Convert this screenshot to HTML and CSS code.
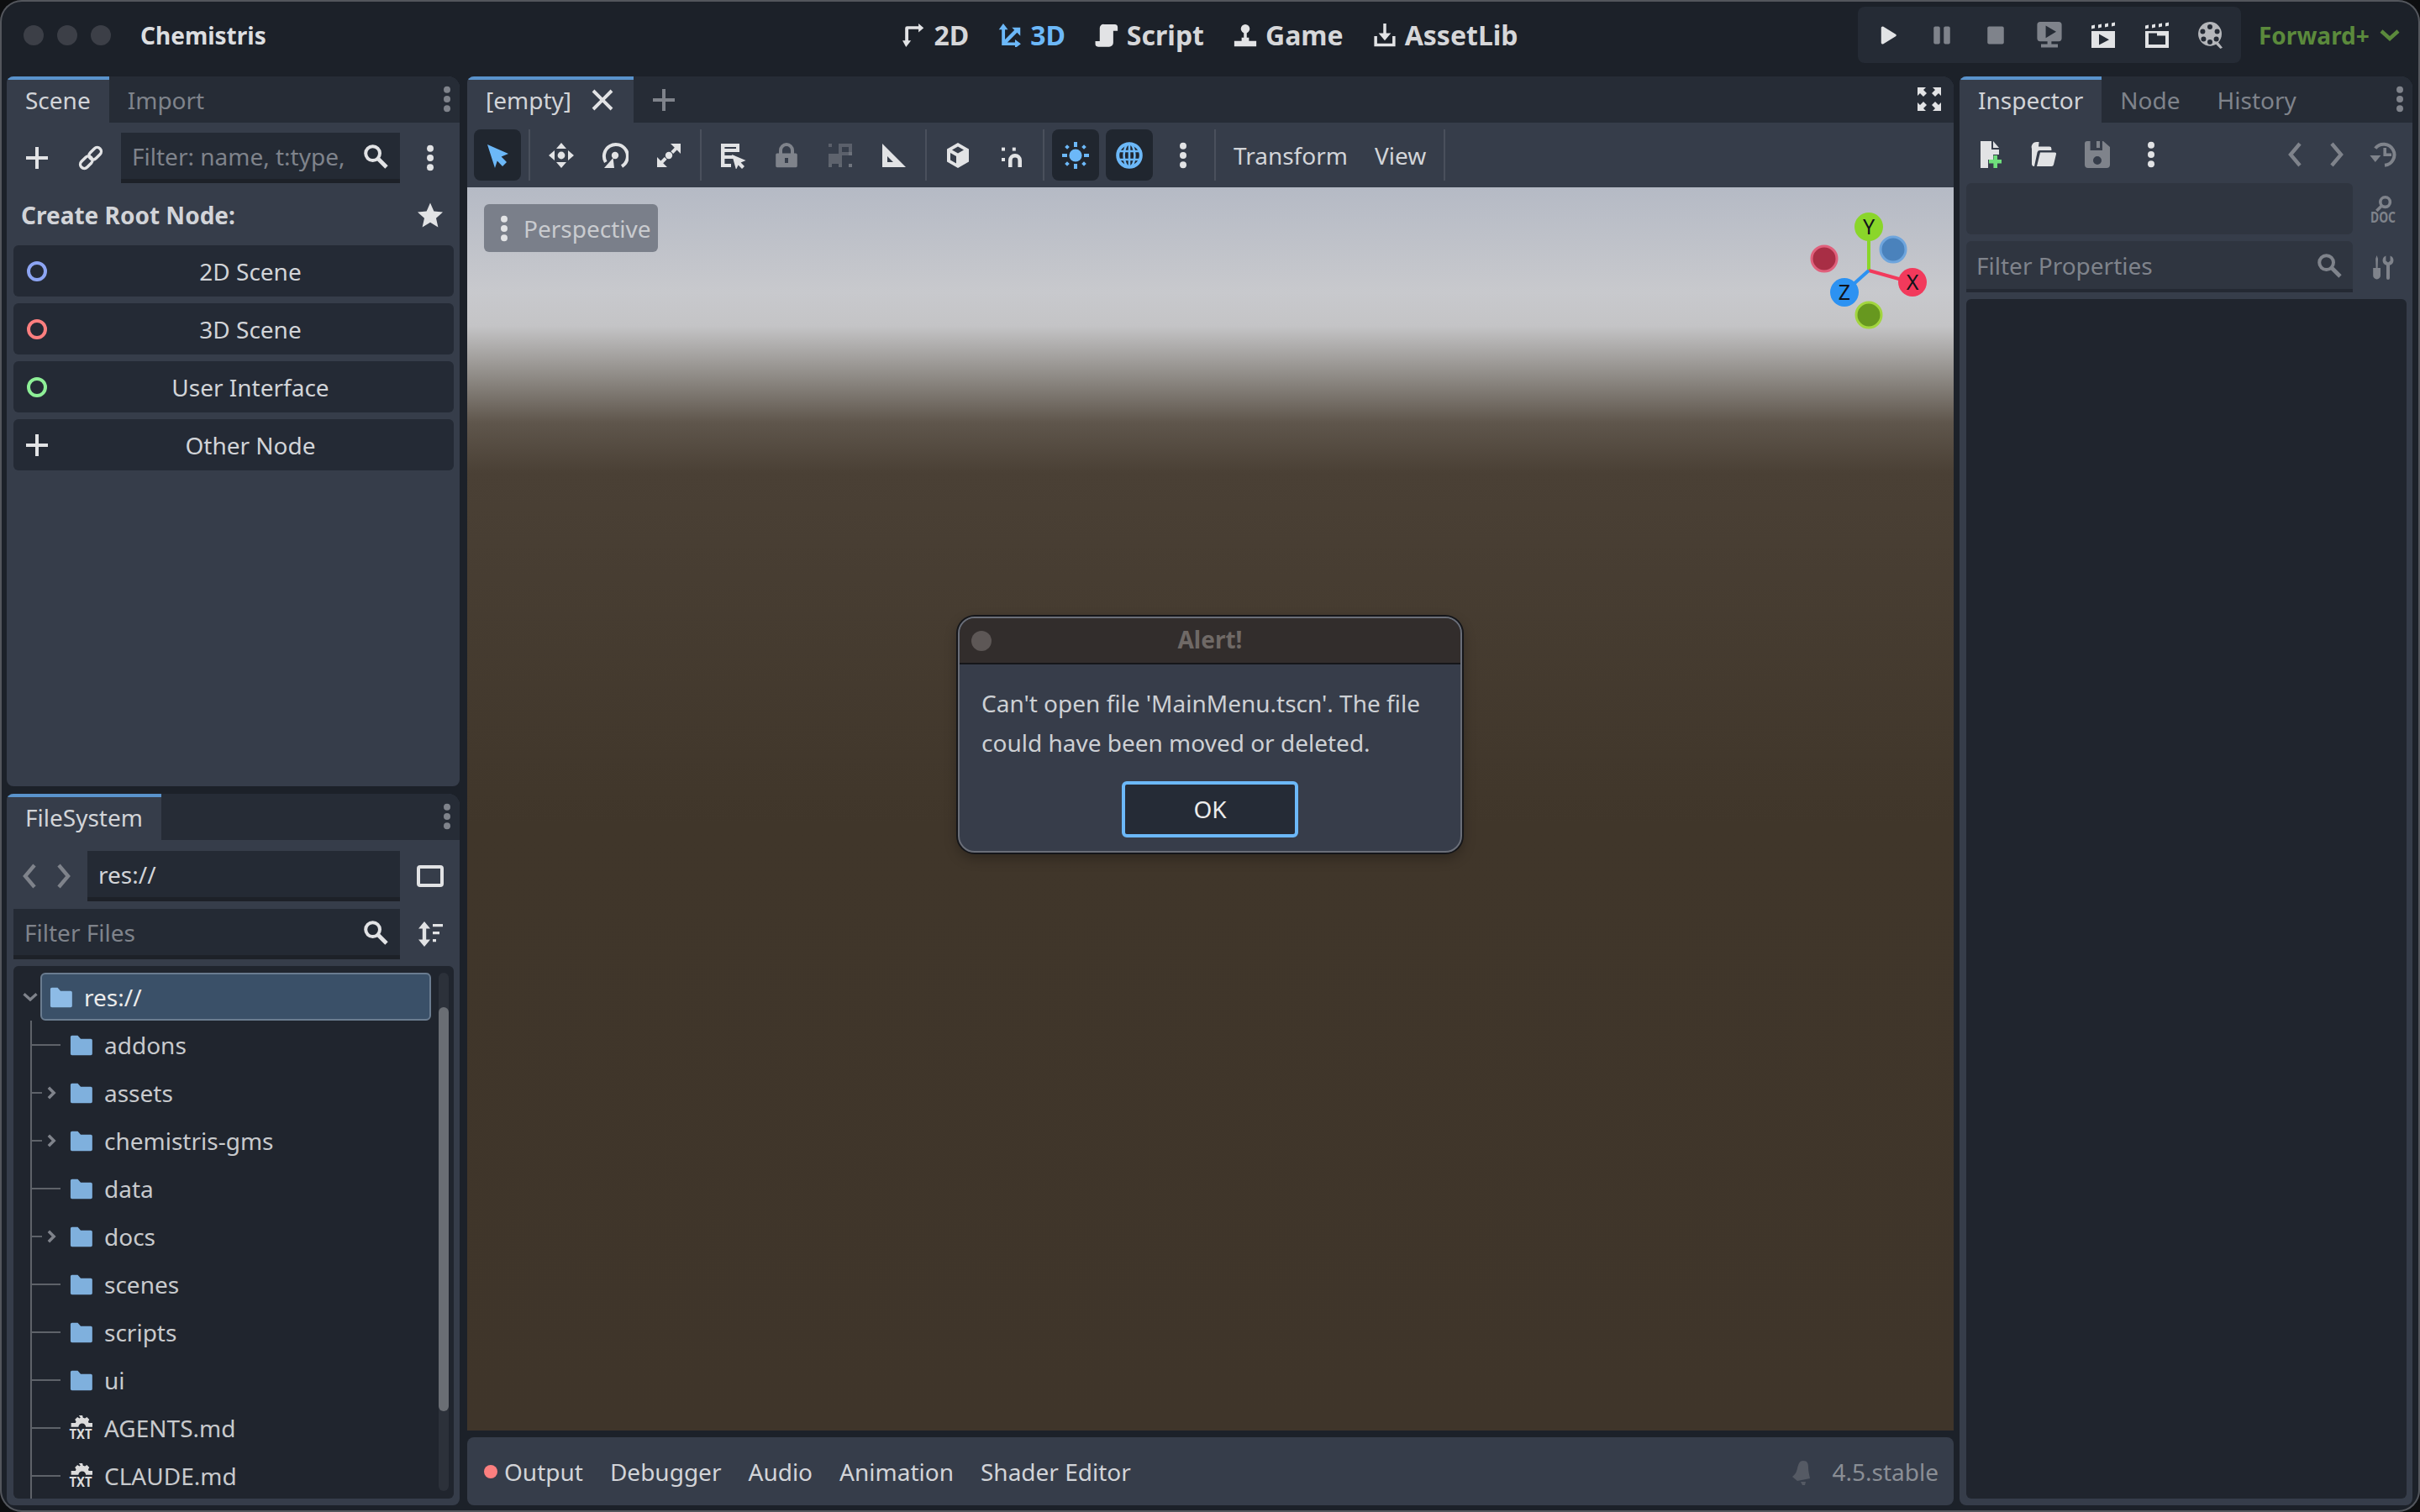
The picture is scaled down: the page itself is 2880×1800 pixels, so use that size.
FILE: index.html
```html
<!doctype html>
<html lang="en">
  <head>
    <meta charset="utf-8">
    <title>Chemistris - Godot Engine</title>
    <link rel="stylesheet" href="styles.css">
  </head>
  <body>
    <svg class="defs" width="0" height="0" aria-hidden="true">
      <symbol id="i-plus" viewBox="0 0 16 16"><path d="M7 1.5h2V7h5.5v2H9v5.5H7V9H1.5V7H7z"/></symbol>
      <symbol id="i-close" viewBox="0 0 16 16"><path d="M3.2 1.8 8 6.6l4.8-4.8 1.4 1.4L9.4 8l4.8 4.8-1.4 1.4L8 9.4l-4.8 4.8-1.4-1.4L6.6 8 1.8 3.2z"/></symbol>
      <symbol id="i-dots" viewBox="0 0 16 16"><circle cx="8" cy="2.4" r="2"/><circle cx="8" cy="8" r="2"/><circle cx="8" cy="13.6" r="2"/></symbol>
      <symbol id="i-search" viewBox="0 0 16 16"><circle cx="6.3" cy="6.3" r="4.2" fill="none" stroke="currentColor" stroke-width="2"/><path d="M9 9l5.5 5.5" stroke="currentColor" stroke-width="2.4" fill="none"/></symbol>
      <symbol id="i-star" viewBox="0 0 16 16"><path d="M8 .8l2.2 5 5.3.5-4 3.6 1.2 5.3L8 12.4l-4.7 2.8 1.2-5.3-4-3.6 5.3-.5z"/></symbol>
      <symbol id="i-link" viewBox="0 0 16 16"><g fill="none" stroke="currentColor" stroke-width="1.7" transform="rotate(45 8 8)"><rect x="5.6" y=".2" width="4.8" height="8.2" rx="2.4"/><rect x="5.6" y="7.6" width="4.8" height="8.2" rx="2.4"/></g></symbol>
      <symbol id="i-2d" viewBox="0 0 16 16"><path d="M3 16 .6 11.5h1.8V3.2a1.4 1.4 0 0 1 1.4-1.4h7.7V0L15 3l-3.500 3V3.900H4.600v7.600h1.800z"/></symbol>
      <symbol id="i-3d" viewBox="0 0 16 16"><path d="M3.400 0l3.200 4.200h-2v6.700L11 4.400 9.300 2.700H15v5.700l-2.200-2.300-6.600 6.700h5.200v-2l4 3-4 3v-2H2.400V4.200h-2z"/></symbol>
      <symbol id="i-script" viewBox="0 0 16 16"><path d="M6 .5h7.500a2 2 0 0 1 2 2V5h-3v8a2.800 2.800 0 0 1-2.800 2.800H2.200a1.900 1.900 0 0 1-1.900-1.900V12h3V3A2.600 2.600 0 0 1 6 .5z"/></symbol>
      <symbol id="i-game" viewBox="0 0 16 16"><circle cx="8" cy="3.600" r="3"/><path d="M7 5.500h2v5H7zM5.500 9.500h5v2.400h5v3.600H.5v-3.600h5z"/></symbol>
      <symbol id="i-asset" viewBox="0 0 16 16"><path d="M7 0h2v6.500h3.200L8 11.500l-4.200-5H7zM.8 8.500h2v5h10.400v-5h2v7H.8z"/></symbol>
      <symbol id="i-play" viewBox="0 0 16 16"><path d="M2.500 2.100c0-.9 1-1.500 1.800-1L14 7.100c.7.400.7 1.400 0 1.800l-9.700 6c-.8.500-1.800-.1-1.800-1z"/></symbol>
      <symbol id="i-pause" viewBox="0 0 16 16"><rect x="1.500" y="1" width="5" height="14" rx="1.300"/><rect x="9.500" y="1" width="5" height="14" rx="1.300"/></symbol>
      <symbol id="i-stop" viewBox="0 0 16 16"><rect x="1.500" y="1" width="13" height="14" rx="1.300"/></symbol>
      <symbol id="i-remote" viewBox="0 0 16 16"><path fill-rule="evenodd" d="M2.500 0h11a1.800 1.800 0 0 1 1.800 1.800v8a1.800 1.800 0 0 1-1.800 1.800H9.200v1.600H13v2H3v-2h3.800v-1.600H2.500A1.800 1.800 0 0 1 .7 9.800v-8A1.800 1.800 0 0 1 2.500 0zM5.800 2.200v7.400L12 5.900z"/></symbol>
      <symbol id="i-movie" viewBox="0 0 16 16"><path fill-rule="evenodd" d="M1 5.500h14v10H1zM5.500 7.300v6.500l6-3.200zM1 2.200l2-.4v2l-2 .4zM5 1.700l2-.4v2l-2 .4zM9 1.200l2-.4v2l-2 .4zM13 .7l2-.4v2l-2 .4z"/></symbol>
      <symbol id="i-movie2" viewBox="0 0 16 16"><path fill-rule="evenodd" d="M1 5.500h14v10H1zM3 8.200v5.300h10V8.200H8V6.800H3zM1 2.200l2-.4v2l-2 .4zM5 1.700l2-.4v2l-2 .4zM9 1.200l2-.4v2l-2 .4zM13 .7l2-.4v2l-2 .4z"/></symbol>
      <symbol id="i-film" viewBox="0 0 16 16"><path fill-rule="evenodd" d="M7.500 0a7 7.200 0 0 1 7 7.200c0 2-.8 3.800-2 5l2.500 3.200-1.300.6-2.600-2.600A7 7.200 0 1 1 7.500 0zm0 1.500a1.500 1.500 0 1 0 0 3 1.500 1.500 0 0 0 0-3zM3.200 4.200a1.500 1.500 0 1 0 0 3 1.500 1.500 0 0 0 0-3zm8.600 0a1.500 1.500 0 1 0 0 3 1.500 1.500 0 0 0 0-3zM3.700 8.700a1.500 1.500 0 1 0 0 3 1.500 1.500 0 0 0 0-3zm7.600 0a1.500 1.500 0 1 0 0 3 1.500 1.500 0 0 0 0-3zm-3.800 1.800a1.500 1.500 0 1 0 0 3 1.500 1.500 0 0 0 0-3z"/></symbol>
      <symbol id="i-select" viewBox="0 0 16 16"><path d="M2 1.500 14.500 7l-4.200 1.800 3.200 3.200-2.500 2.500-3.100-3.200-1.400 4.200z"/></symbol>
      <symbol id="i-move" viewBox="0 0 16 16"><path d="M8 .5 11 4H5zM8 15.500 5 12h6zM.5 8 4 5v6zM15.500 8 12 11V5z"/><circle cx="8" cy="8" r="2.200"/></symbol>
      <symbol id="i-rotate" viewBox="0 0 16 16"><path d="M12 14.500A7 7 0 1 0 2.400 12" fill="none" stroke="currentColor" stroke-width="2"/><path d="M6.800 9.500l.7 6h-6z"/><circle cx="8" cy="8" r="2.100"/></symbol>
      <symbol id="i-scale" viewBox="0 0 16 16"><path d="M9 1h6v6l-2.200-2.200-2.200 2.200-1.400-1.400 2.200-2.200zM7 15H1V9l2.200 2.200L5.400 9l1.400 1.400-2.200 2.200z"/><circle cx="8" cy="8" r="2.100"/></symbol>
      <symbol id="i-listsel" viewBox="0 0 16 16"><path d="M1 1h11v5H3.200v2H9v2H3.200v3H7v2H1zM3.200 3v1H10V3z" fill-rule="evenodd"/><path d="M7.500 7.500l8.300 3.500-3 1.200 2.200 2.300-1.500 1.500-2.200-2.300-1.300 2.800z"/></symbol>
      <symbol id="i-lock" viewBox="0 0 16 16"><path fill-rule="evenodd" d="M3.500 6.800V5a4.500 4.500 0 0 1 9 0v1.800h1.100a.8.800 0 0 1 .8.800v6.700a.8.800 0 0 1-.8.800H2.400a.8.800 0 0 1-.8-.8V7.600a.8.800 0 0 1 .8-.8zm2 0h5V5a2.500 2.500 0 0 0-5 0zM7 9.500v3h2v-3z"/></symbol>
      <symbol id="i-group" viewBox="0 0 16 16"><rect x="1" y="1" width="2" height="2" opacity=".5"/><rect x="7" y="1" width="8" height="2" opacity=".5"/><rect x="7" y="3" width="2" height="4" opacity=".5"/><rect x="13" y="3" width="2" height="5" opacity=".5"/><rect x="9" y="6" width="6" height="2" opacity=".5"/><rect x="1" y="7" width="8" height="6" opacity=".55"/><rect x="1" y="13" width="2" height="2" opacity=".6"/><rect x="7" y="13" width="2" height="2" opacity=".6"/><rect x="13" y="13" width="2" height="2" opacity=".8"/></symbol>
      <symbol id="i-ruler" viewBox="0 0 16 16"><path fill-rule="evenodd" d="M1 1l14 14H1zM4 8.500V12h3.500z"/></symbol>
      <symbol id="i-cube" viewBox="0 0 16 16"><path fill-rule="evenodd" d="M8 .5l6.500 3.700v7.600L8 15.500l-6.500-3.700V4.200zM3.500 6.500v4.200L7 12.800V8.500zM8 2.700 4.500 4.700 8 6.800l3.500-2.100z"/></symbol>
      <symbol id="i-magnet" viewBox="0 0 16 16"><rect x="2" y="3.300" width="2" height="2"/><rect x="8.400" y="3.300" width="2" height="2"/><rect x="2" y="9.500" width="2" height="2"/><path d="M6 15v-4a4 4 0 0 1 8 0v4h-2.300v-4a1.700 1.700 0 0 0-3.400 0v4z"/></symbol>
      <symbol id="i-sun" viewBox="0 0 16 16"><circle cx="8" cy="8" r="3.800"/><path d="M7 0h2v3H7zM7 13h2v3H7zM0 7h3v2H0zM13 7h3v2h-3zM3 1.600 4.400 3 3 4.400 1.600 3zM13 1.600 14.400 3 13 4.400 11.600 3zM3 11.600 4.400 13 3 14.400 1.600 13zM13 11.600 14.400 13 13 14.400 11.600 13z"/></symbol>
      <symbol id="i-globe" viewBox="0 0 16 16"><g fill="none" stroke="currentColor" stroke-width="1.300"><circle cx="8" cy="8" r="6.900" stroke-width="2"/><ellipse cx="8" cy="8" rx="3.200" ry="7"/><path d="M8 1v14M1.500 5.500h13M1.500 10.500h13"/></g></symbol>
      <symbol id="i-full" viewBox="0 0 16 16"><path d="M1 1h5L4.500 2.500l2 2-2 2-2-2L1 6zM15 1v5l-1.500-1.500-2 2-2-2 2-2L10 1zM1 15v-5l1.500 1.500 2-2 2 2-2 2L6 15zM15 15h-5l1.500-1.500-2-2 2-2 2 2L15 10z"/></symbol>
      <symbol id="i-new" viewBox="0 0 16 16"><path d="M2.500 0H9v5h4.500v3H10v3H7v5H2.500zM10 0l3.500 4H10z"/><path fill="#6fe07c" d="M10.200 8.500h2.300V11H15v2.300h-2.500V16h-2.300v-2.700H7.500V11h2.700z"/></symbol>
      <symbol id="i-open" viewBox="0 0 16 16"><path d="M5 3.300h6.500a1.200 1.200 0 0 1 1.200 1.200v1H5.700a1.500 1.500 0 0 0-1.400 1.100L2.500 15h-.3A1.200 1.200 0 0 1 1 13.800V4.500a3 3 0 0 1 3-4h1.300z"/><path d="M6 6.700h8.700a.8.800 0 0 1 .8 1L14 14a1.300 1.300 0 0 1-1.300 1H4z"/></symbol>
      <symbol id="i-save" viewBox="0 0 16 16"><path fill-rule="evenodd" d="M2 0h1.800v5.500H11V0h.5l4 3.500V14a2 2 0 0 1-2 2h-11a2 2 0 0 1-2-2V1.500A1.500 1.500 0 0 1 2 0zm6 9a2.500 2.500 0 1 0 0 5 2.500 2.500 0 0 0 0-5zM7.500 0h2v4h-2z"/></symbol>
      <symbol id="i-prev" viewBox="0 0 16 16"><path d="M10.500 1.500 5 8l5.500 6.500" fill="none" stroke="currentColor" stroke-width="2.200"/></symbol>
      <symbol id="i-next" viewBox="0 0 16 16"><path d="M5.500 1.500 11 8l-5.500 6.500" fill="none" stroke="currentColor" stroke-width="2.200"/></symbol>
      <symbol id="i-history" viewBox="0 0 16 16"><path d="M3.400 4.300A6.300 6.300 0 1 1 9 14.400" fill="none" stroke="currentColor" stroke-width="2"/><path d="M.2 8.500h6.500l-3.300 4zM8.200 4H10v3.200h3V9H8.200z"/></symbol>
      <symbol id="i-tools" viewBox="0 0 16 16"><path d="M4.300 1l.7 2-.2 5.500h1.700V13a2.200 2.200 0 0 1-4.400 0V8.500h1.700L3.600 3zM9.700 1.200v3L11 5.200l1.300-1V1.200A3 3 0 0 1 12 6.900v7.600a1 1 0 0 1-2 0V6.900a3 3 0 0 1-.3-5.700z"/></symbol>
      <symbol id="i-split" viewBox="0 0 16 16"><rect x="1" y="2.500" width="14" height="11" rx="1" fill="none" stroke="currentColor" stroke-width="2"/></symbol>
      <symbol id="i-sort" viewBox="0 0 16 16"><path d="M4.500.5 8 4.700H5.600v6.600H8l-3.500 4.200L1 11.300h2.400V4.700H1zM9.500 2h6v1.600h-6zM9.500 6.500h4v1.600h-4zM9.500 11h2v1.600h-2z"/></symbol>
      <symbol id="i-bell" viewBox="0 0 16 16"><path d="M8.500 1.500c2.500 0 3 1.500 3 4 0 2 .5 4 1 6.500L5 13.500 2 11c2-1.500 2.500-3 3-5 .5-2 1-4.500 3.500-4.500zM7 14h3l-.5 2H8z"/></symbol>
      <symbol id="i-down" viewBox="0 0 16 16"><path d="M3 5.500 8 10l5-4.500" fill="none" stroke="currentColor" stroke-width="2.200"/></symbol>
      <symbol id="i-right" viewBox="0 0 16 16"><path d="M5.500 3l5 5-5 5" fill="none" stroke="currentColor" stroke-width="2.800"/></symbol>
      <symbol id="i-folder" viewBox="0 0 16 16"><path d="M1.100 2.500a1 1 0 0 1 1-1H6l2 2.300h6.900a1 1 0 0 1 1 1V14a1 1 0 0 1-1 1H2.100a1 1 0 0 1-1-1z"/></symbol>
      <symbol id="i-gear" viewBox="0 0 16 16"><path d="M6.800 0h2.400l.4 1.500 1.300.5 1.300-.8 1.700 1.700-.8 1.300.4 1h3v2.700h-5a2.500 2.500 0 0 0-5 0h-5V5.200h3l.4-1-.8-1.300 1.700-1.700 1.300.8.800-.5z"/></symbol>
    </svg>

    <div class="window">
      <header class="topbar">
        <div class="top-left">
          <span class="light"></span><span class="light"></span><span class="light"></span>
          <span class="app-title">Chemistris</span>
        </div>
        <nav class="main-modes">
          <span class="mode"><svg class="ico"><use href="#i-2d"/></svg>2D</span>
          <span class="mode mode-on"><svg class="ico"><use href="#i-3d"/></svg>3D</span>
          <span class="mode"><svg class="ico"><use href="#i-script"/></svg>Script</span>
          <span class="mode"><svg class="ico"><use href="#i-game"/></svg>Game</span>
          <span class="mode"><svg class="ico"><use href="#i-asset"/></svg>AssetLib</span>
        </nav>
        <div class="top-right">
          <div class="run-bar">
            <span class="btn"><svg class="ico ico-small"><use href="#i-play"/></svg></span>
            <span class="btn"><svg class="ico ico-small dim"><use href="#i-pause"/></svg></span>
            <span class="btn"><svg class="ico ico-small dim"><use href="#i-stop"/></svg></span>
            <span class="btn"><svg class="ico dim"><use href="#i-remote"/></svg></span>
            <span class="btn"><svg class="ico"><use href="#i-movie"/></svg></span>
            <span class="btn"><svg class="ico"><use href="#i-movie2"/></svg></span>
            <span class="btn"><svg class="ico soft"><use href="#i-film"/></svg></span>
          </div>
          <span class="renderer">Forward+<svg class="ico"><use href="#i-down"/></svg></span>
        </div>
      </header>

      <main class="workspace">
        <div class="dock-left">
          <section class="panel scene-panel">
            <div class="tabs">
              <span class="tab tab-on">Scene</span>
              <span class="tab">Import</span>
              <svg class="ico tab-menu"><use href="#i-dots"/></svg>
            </div>
            <div class="scene-tools">
              <span class="btn"><svg class="ico"><use href="#i-plus"/></svg></span>
              <span class="btn"><svg class="ico"><use href="#i-link"/></svg></span>
              <div class="field scene-filter"><span class="hint">Filter: name, t:type,</span><svg class="ico"><use href="#i-search"/></svg></div>
              <span class="btn"><svg class="ico"><use href="#i-dots"/></svg></span>
            </div>
            <div class="root-head">
              <b>Create Root Node:</b>
              <svg class="ico"><use href="#i-star"/></svg>
            </div>
            <div class="root-list">
              <div class="root-btn"><span class="ring ring-blue"></span><span class="root-label">2D Scene</span></div>
              <div class="root-btn"><span class="ring ring-red"></span><span class="root-label">3D Scene</span></div>
              <div class="root-btn"><span class="ring ring-green"></span><span class="root-label">User Interface</span></div>
              <div class="root-btn"><svg class="ico"><use href="#i-plus"/></svg><span class="root-label">Other Node</span></div>
            </div>
          </section>

          <section class="panel fs-panel">
            <div class="tabs">
              <span class="tab tab-on">FileSystem</span>
              <svg class="ico tab-menu"><use href="#i-dots"/></svg>
            </div>
            <div class="fs-path">
              <svg class="ico dim nav-arrow"><use href="#i-prev"/></svg>
              <svg class="ico dim nav-arrow"><use href="#i-next"/></svg>
              <div class="field path-field">res://</div>
              <span class="btn"><svg class="ico"><use href="#i-split"/></svg></span>
            </div>
            <div class="fs-filter">
              <div class="field files-field"><span class="hint">Filter Files</span><svg class="ico"><use href="#i-search"/></svg></div>
              <span class="btn"><svg class="ico"><use href="#i-sort"/></svg></span>
            </div>
            <div class="tree">
              <div class="tree-rows">
                <div class="tree-root">
                  <svg class="ico dim root-arrow"><use href="#i-down"/></svg>
                  <div class="root-row"><svg class="folder"><use href="#i-folder"/></svg>res://</div>
                </div>
                <div class="row"><span class="guide"></span><svg class="folder"><use href="#i-folder"/></svg>addons</div>
                <div class="row"><span class="guide guide-short"><svg class="ico dim row-arrow"><use href="#i-right"/></svg></span><svg class="folder"><use href="#i-folder"/></svg>assets</div>
                <div class="row"><span class="guide guide-short"><svg class="ico dim row-arrow"><use href="#i-right"/></svg></span><svg class="folder"><use href="#i-folder"/></svg>chemistris-gms</div>
                <div class="row"><span class="guide"></span><svg class="folder"><use href="#i-folder"/></svg>data</div>
                <div class="row"><span class="guide guide-short"><svg class="ico dim row-arrow"><use href="#i-right"/></svg></span><svg class="folder"><use href="#i-folder"/></svg>docs</div>
                <div class="row"><span class="guide"></span><svg class="folder"><use href="#i-folder"/></svg>scenes</div>
                <div class="row"><span class="guide"></span><svg class="folder"><use href="#i-folder"/></svg>scripts</div>
                <div class="row"><span class="guide"></span><svg class="folder"><use href="#i-folder"/></svg>ui</div>
                <div class="row"><span class="guide"></span><svg class="txt" viewBox="0 0 16 20"><use href="#i-gear" width="16" height="16"/><text x="8" y="16" textLength="15.500" lengthAdjust="spacingAndGlyphs" class="icon-text">TXT</text></svg>AGENTS.md</div>
                <div class="row"><span class="guide"></span><svg class="txt" viewBox="0 0 16 20"><use href="#i-gear" width="16" height="16"/><text x="8" y="16" textLength="15.500" lengthAdjust="spacingAndGlyphs" class="icon-text">TXT</text></svg>CLAUDE.md</div>
              </div>
              <div class="scroll-track"><div class="scroll-thumb"></div></div>
            </div>
          </section>
        </div>

        <div class="center">
          <section class="editor">
            <div class="tabs">
              <span class="tab tab-on doc-tab">[empty]<svg class="ico"><use href="#i-close"/></svg></span>
              <svg class="ico dim new-tab"><use href="#i-plus"/></svg>
              <svg class="ico tab-menu"><use href="#i-full"/></svg>
            </div>
            <div class="toolbar">
              <span class="btn btn-press tool-first"><svg class="ico blue"><use href="#i-select"/></svg></span>
              <span class="sep"></span>
              <span class="btn"><svg class="ico"><use href="#i-move"/></svg></span>
              <span class="btn"><svg class="ico"><use href="#i-rotate"/></svg></span>
              <span class="btn"><svg class="ico"><use href="#i-scale"/></svg></span>
              <span class="sep"></span>
              <span class="btn"><svg class="ico"><use href="#i-listsel"/></svg></span>
              <span class="btn"><svg class="ico dim"><use href="#i-lock"/></svg></span>
              <span class="btn"><svg class="ico dim"><use href="#i-group"/></svg></span>
              <span class="btn"><svg class="ico"><use href="#i-ruler"/></svg></span>
              <span class="sep"></span>
              <span class="btn"><svg class="ico"><use href="#i-cube"/></svg></span>
              <span class="btn"><svg class="ico"><use href="#i-magnet"/></svg></span>
              <span class="sep"></span>
              <span class="btn btn-press tool-sun"><svg class="ico blue"><use href="#i-sun"/></svg></span>
              <span class="btn btn-press"><svg class="ico blue"><use href="#i-globe"/></svg></span>
              <span class="btn tool-dots"><svg class="ico"><use href="#i-dots"/></svg></span>
              <span class="sep"></span>
              <span class="menu-item">Transform</span>
              <span class="menu-item">View</span>
              <span class="sep"></span>
            </div>
            <div class="viewport">
              <div class="persp"><svg class="ico"><use href="#i-dots"/></svg>Perspective</div>
              <svg class="gizmo" width="150" height="150" viewBox="0 0 150 150">
                <path d="M75 90V30" stroke="#8ad62a" stroke-width="4"/>
                <path d="M75 90 125 104" stroke="#f23a5c" stroke-width="4"/>
                <path d="M75 90 46 116" stroke="#2c92f2" stroke-width="4"/>
                <circle cx="104" cy="65" r="15" fill="#4a82bc" stroke="#6ea5dd" stroke-width="3"/>
                <circle cx="22" cy="76" r="15" fill="#a82e45" stroke="#e0607c" stroke-width="3"/>
                <circle cx="75" cy="143" r="15" fill="#67981f" stroke="#a2d53f" stroke-width="3"/>
                <circle cx="75" cy="38" r="17" fill="#8ad62a"/>
                <circle cx="127" cy="104" r="17" fill="#f23a5c"/>
                <circle cx="46" cy="116" r="17" fill="#2c92f2"/>
                <text x="75" y="47" class="gizmo-label">Y</text>
                <text x="127" y="113" class="gizmo-label">X</text>
                <text x="46" y="125" class="gizmo-label">Z</text>
              </svg>
            </div>
          </section>
          <section class="bottom-bar">
            <span class="log-dot"></span>
            <span class="bottom-item bottom-first">Output</span>
            <span class="bottom-item">Debugger</span>
            <span class="bottom-item">Audio</span>
            <span class="bottom-item">Animation</span>
            <span class="bottom-item">Shader Editor</span>
            <svg class="ico bell"><use href="#i-bell"/></svg>
            <span class="version">4.5.stable</span>
          </section>
        </div>

        <section class="panel inspector">
          <div class="tabs">
            <span class="tab tab-on">Inspector</span>
            <span class="tab">Node</span>
            <span class="tab">History</span>
            <svg class="ico tab-menu"><use href="#i-dots"/></svg>
          </div>
          <div class="insp-tools">
            <span class="btn"><svg class="ico"><use href="#i-new"/></svg></span>
            <span class="btn"><svg class="ico"><use href="#i-open"/></svg></span>
            <span class="btn"><svg class="ico dim"><use href="#i-save"/></svg></span>
            <span class="btn"><svg class="ico"><use href="#i-dots"/></svg></span>
            <span class="btn insp-prev"><svg class="ico dim"><use href="#i-prev"/></svg></span>
            <span class="btn insp-next"><svg class="ico dim"><use href="#i-next"/></svg></span>
            <span class="btn insp-hist"><svg class="ico dim"><use href="#i-history"/></svg></span>
          </div>
          <div class="insp-row">
            <div class="field-plain"></div>
            <svg class="ico dim doc-ico" viewBox="-2 0 20 20"><circle cx="9.300" cy="3.800" r="2.900" fill="none" stroke="currentColor" stroke-width="1.800"/><path d="M7.200 6 4.200 9" stroke="currentColor" stroke-width="1.800" fill="none"/><text x="8" y="16" textLength="15" lengthAdjust="spacingAndGlyphs" class="icon-text">DOC</text></svg>
          </div>
          <div class="insp-row">
            <div class="field-plain field-line"><span class="hint">Filter Properties</span><svg class="ico dim"><use href="#i-search"/></svg></div>
            <svg class="ico dim"><use href="#i-tools"/></svg>
          </div>
          <div class="insp-body"></div>
        </section>
      </main>

      <div class="alert">
        <div class="alert-head"><span class="alert-dot"></span><b>Alert!</b></div>
        <div class="alert-body">
          <p>Can't open file 'MainMenu.tscn'. The file could have been moved or deleted.</p>
          <span class="ok-btn">OK</span>
        </div>
      </div>
    </div>
  </body>
</html>
```

FILE: styles.css
```css
* {
  box-sizing: border-box;
}
body {
  margin: 0;
  background: #0d0e10;
  color: #d2d4d8;
  font-family: "Noto Sans", sans-serif;
  font-size: 28px;
}
.defs {
  display: block;
  height: 0;
}
.icon-text {
  font-family: "Noto Sans", sans-serif;
  font-size: 9px;
  font-weight: 700;
  text-anchor: middle;
  fill: currentColor;
}

.window {
  position: relative;
  width: 2880px;
  height: 1800px;
  background: #1c2129;
  border-radius: 26px;
  box-shadow: inset 0 0 0 2px #53565c;
  overflow: hidden;
}

.ico {
  display: block;
  flex: none;
  width: 32px;
  height: 32px;
  fill: currentColor;
  color: #e2e3e5;
}
.ico.dim {
  color: #7f838b;
}
.ico.soft {
  color: #b4b6ba;
}
.ico.blue {
  color: #6cb8f8;
}
.ico-small {
  width: 24px;
  height: 24px;
}
.btn {
  display: flex;
  flex: none;
  align-items: center;
  justify-content: center;
  width: 64px;
  height: 61px;
}
.hint {
  color: #7f838b;
}

/* top bar */
.topbar {
  display: grid;
  grid-template-columns: 1fr auto 1fr;
  align-items: center;
  height: 91px;
  padding: 8px 8px 16px;
}
.top-left {
  display: flex;
  align-items: center;
  padding-left: 20px;
}
.light {
  width: 24px;
  height: 24px;
  margin-right: 16px;
  border-radius: 50%;
  background: #3c3f47;
}
.app-title {
  margin-left: 19px;
  font-weight: 700;
  color: #dcdee0;
}
.main-modes {
  display: flex;
  gap: 35px;
}
.mode {
  display: flex;
  align-items: center;
  gap: 10px;
  font-size: 32px;
  font-weight: 700;
  color: #d6d7d9;
}
.mode .ico {
  width: 28px;
  height: 28px;
}
.mode-on,
.mode-on .ico {
  color: #6cb8f8;
}
.top-right {
  display: flex;
  align-items: center;
  justify-content: flex-end;
}
.run-bar {
  display: flex;
  align-items: center;
  height: 67px;
  padding: 0 4px;
  border-radius: 8px;
  background: #252b35;
}
.renderer {
  display: flex;
  align-items: center;
  gap: 8px;
  width: 205px;
  padding-left: 21px;
  font-weight: 700;
  color: #5b8a3c;
}
.renderer .ico {
  color: #5b8a3c;
}

/* workspace */
.workspace {
  display: grid;
  grid-template-columns: 539px 1785px 539px;
  height: 1709px;
  padding: 0 8px 8px;
}
.dock-left {
  display: flex;
  flex-direction: column;
  gap: 9px;
  min-height: 0;
}
.panel {
  display: flex;
  flex-direction: column;
  border-radius: 8px 14px 8px 8px;
  background: #363d4a;
  overflow: hidden;
}
.scene-panel {
  flex: none;
  height: 845px;
}
.fs-panel {
  flex: 1;
  min-height: 0;
}
.tabs {
  display: flex;
  flex: none;
  align-items: stretch;
  height: 55px;
  background: #262c36;
}
.tab {
  display: flex;
  align-items: center;
  padding: 0 22px 3px;
  border-top: 4px solid transparent;
  color: #7f838b;
}
.tab-on {
  border-top-color: #5a93cc;
  background: #363d4a;
  color: #d2d4d8;
}
.tab-menu {
  margin: 11px 0 0 auto;
}
.tabs .tab-menu {
  margin-right: -1px;
  color: #7f838b;
}
.field {
  display: flex;
  align-items: center;
  height: 60px;
  border-bottom: 5px solid #1d2128;
  background: #242a34;
}

/* scene dock */
.scene-tools {
  display: flex;
  align-items: center;
  height: 72px;
  margin-top: 6px;
  padding-left: 4px;
}
.scene-filter {
  width: 332px;
  margin-left: 4px;
  padding: 0 13px;
  justify-content: space-between;
}
.scene-tools .btn:last-child {
  margin-left: 4px;
}
.root-head {
  display: flex;
  align-items: center;
  justify-content: space-between;
  height: 48px;
  margin-top: 8px;
  padding: 0 19px 0 17px;
}
.root-list {
  display: flex;
  flex-direction: column;
  gap: 8px;
  padding: 12px 7px 0 8px;
}
.root-btn {
  display: flex;
  align-items: center;
  height: 61px;
  padding: 0 4px 0 12px;
  border-radius: 6px;
  background: #242a35;
}
.root-label {
  flex: 1;
  text-align: center;
}
.ring {
  flex: none;
  width: 24px;
  height: 24px;
  margin: 0 4px;
  border: 4px solid;
  border-radius: 50%;
}
.ring-blue {
  border-color: #8da5f3;
}
.ring-red {
  border-color: #fc7f7f;
}
.ring-green {
  border-color: #8eef97;
}

/* filesystem dock */
.fs-path,
.fs-filter {
  display: flex;
  align-items: center;
}
.fs-path {
  height: 60px;
  margin-top: 13px;
}
.nav-arrow {
  margin-right: 7px;
}
.nav-arrow:first-child {
  margin-left: 12px;
}
.path-field {
  width: 372px;
  margin-left: 6px;
  margin-right: 4px;
  padding-left: 13px;
  color: #d2d4d8;
}
.fs-filter {
  height: 60px;
  margin-top: 9px;
  padding-left: 8px;
}
.files-field {
  width: 460px;
  margin-right: 4px;
  padding: 0 13px;
  justify-content: space-between;
}
.tree {
  display: flex;
  flex: 1;
  min-height: 0;
  margin: 8px 7px 8px 8px;
  padding-top: 8px;
  border-radius: 6px;
  background: #20252e;
  overflow: hidden;
}
.tree-rows {
  flex: none;
  width: 497px;
}
.tree-root {
  display: flex;
  align-items: center;
  height: 57px;
  padding-left: 8px;
}
.root-row {
  display: flex;
  flex: 1;
  align-items: center;
  height: 57px;
  padding-left: 8px;
  border: 2px solid #6a7c90;
  border-radius: 6px;
  background: #3a5068;
  color: #ececec;
}
.root-row .folder {
  margin-right: 14px;
  color: #8dbbe6;
}
.root-arrow {
  width: 24px;
  height: 24px;
}
.row {
  display: flex;
  align-items: center;
  height: 57px;
  padding-left: 20px;
  color: #c8cacd;
}
.guide {
  display: flex;
  flex: none;
  align-items: center;
  justify-content: flex-end;
  width: 46px;
  height: 100%;
  border-left: 2px solid #5e6269;
  background: linear-gradient(#5e6269, #5e6269) 0 50% / 34px 2px no-repeat;
}
.guide-short {
  background-size: 12px 2px;
}
.row-arrow {
  width: 20px;
  height: 20px;
  margin-right: 11px;
}
.folder,
.txt {
  flex: none;
  width: 28px;
  height: 28px;
  margin-right: 14px;
  fill: currentColor;
}
.folder {
  color: #7fb0dd;
}
.txt {
  height: 35px;
  margin-top: 5px;
  color: #dcdcdc;
}
.scroll-track {
  flex: none;
  width: 12px;
  height: 617px;
  margin-left: 9px;
  padding-top: 41px;
  border-radius: 6px;
  background: #2c313a;
}
.scroll-thumb {
  height: 481px;
  border-radius: 6px;
  background: #6a6e74;
}

/* center: editor and bottom bar */
.center {
  display: flex;
  flex-direction: column;
  gap: 8px;
  min-height: 0;
  margin: 0 7px 0 9px;
}
.editor {
  display: flex;
  flex: 1;
  flex-direction: column;
  min-height: 0;
  border-radius: 8px 14px 0 0;
  background: #363d4a;
  overflow: hidden;
}
.doc-tab {
  gap: 21px;
  width: 198px;
}
.new-tab {
  align-self: center;
  margin: 0 0 0 20px;
}
.tabs .new-tab + .tab-menu {
  margin-right: 13px;
  color: #e2e3e5;
}
.toolbar {
  display: flex;
  flex: none;
  align-items: center;
  height: 77px;
  padding-left: 8px;
}
.btn-press {
  width: 56px;
  border-radius: 8px;
  background: #20262f;
}
.tool-first {
  margin-right: 4px;
}
.tool-sun {
  margin: 0 8px 0 4px;
}
.tool-dots {
  margin-left: 4px;
}
.sep {
  flex: none;
  width: 2px;
  height: 61px;
  margin: 0 5px;
  background: #4a505c;
}
.menu-item {
  padding: 0 16px;
  color: #d2d4d8;
}
.viewport {
  position: relative;
  flex: 1;
  min-height: 0;
  background: linear-gradient(#b5bac5 0, #c8c9cd 125px, #c4c4c6 165px, #8f8b86 225px, #5f564c 280px, #4a4035 340px, #40362a 760px, #3f352a 100%);
}
.persp {
  position: absolute;
  left: 20px;
  top: 20px;
  display: flex;
  align-items: center;
  gap: 7px;
  width: 207px;
  height: 57px;
  padding-left: 8px;
  border-radius: 6px;
  background: #7a7f8a;
  color: #c9cbcf;
}
.gizmo {
  position: absolute;
  top: 9px;
  right: 26px;
  overflow: visible;
}
.gizmo-label {
  font-family: "Noto Sans", sans-serif;
  font-size: 25px;
  text-anchor: middle;
  fill: #10131a;
}
.bottom-bar {
  display: flex;
  flex: none;
  align-items: center;
  height: 81px;
  padding: 0 18px 0 20px;
  border-radius: 8px;
  background: #363d4a;
}
.log-dot {
  width: 16px;
  height: 16px;
  margin-right: 8px;
  border-radius: 50%;
  background: #fc7f7f;
}
.bottom-item {
  margin-right: 32px;
}
.bell {
  margin-left: auto;
  margin-right: 19px;
}
.bottom-bar .bell {
  color: #555a64;
}
.version {
  color: #8a8e95;
}

/* inspector */
.inspector {
  min-height: 0;
}
.insp-tools {
  display: flex;
  flex: none;
  align-items: center;
  height: 72px;
  padding: 4px 0 0 4px;
}
.insp-prev {
  width: 48px;
  margin-left: auto;
}
.insp-next {
  width: 48px;
}
.insp-hist {
  margin-right: 3px;
}
.insp-row {
  display: flex;
  flex: none;
  align-items: center;
  gap: 20px;
  margin-bottom: 8px;
  padding-left: 8px;
}
.doc-ico {
  width: 40px;
  height: 40px;
  margin: 0 -4px -8px;
}
.field-plain {
  display: flex;
  align-items: center;
  justify-content: space-between;
  width: 460px;
  height: 61px;
  padding: 0 12px;
  border-radius: 6px;
  background: #2f3540;
}
.field-line {
  border-radius: 6px 6px 0 0;
  border-bottom: 4px solid #242933;
}
.insp-body {
  flex: 1;
  margin: 0 7px 8px 8px;
  border-radius: 6px;
  background: #20252e;
}

/* alert dialog */
.alert {
  position: absolute;
  left: 1140px;
  top: 734px;
  width: 600px;
  height: 281px;
  border: 2px solid #6a6e78;
  border-radius: 20px;
  background: #373d4a;
  box-shadow: 0 0 0 2px #15161a, 0 6px 16px rgba(0, 0, 0, 0.3);
  overflow: hidden;
}
.alert-head {
  position: relative;
  display: flex;
  align-items: center;
  justify-content: center;
  height: 55px;
  padding-bottom: 3px;
  border-bottom: 2px solid #15161a;
  background: #322d2c;
  color: #6f6966;
}
.alert-dot {
  position: absolute;
  left: 14px;
  top: 15px;
  width: 24px;
  height: 24px;
  border-radius: 50%;
  background: #5d5756;
}
.alert-body {
  display: flex;
  flex-direction: column;
  align-items: center;
  padding: 0 26px;
}
.alert-body p {
  margin: 23px 0 22px;
  line-height: 47px;
  color: #cdd0d4;
}
.ok-btn {
  display: flex;
  align-items: center;
  justify-content: center;
  width: 210px;
  height: 67px;
  padding-bottom: 2px;
  border: 4px solid #6cb8f8;
  border-radius: 6px;
  background: #252b36;
  color: #ececec;
}
```
